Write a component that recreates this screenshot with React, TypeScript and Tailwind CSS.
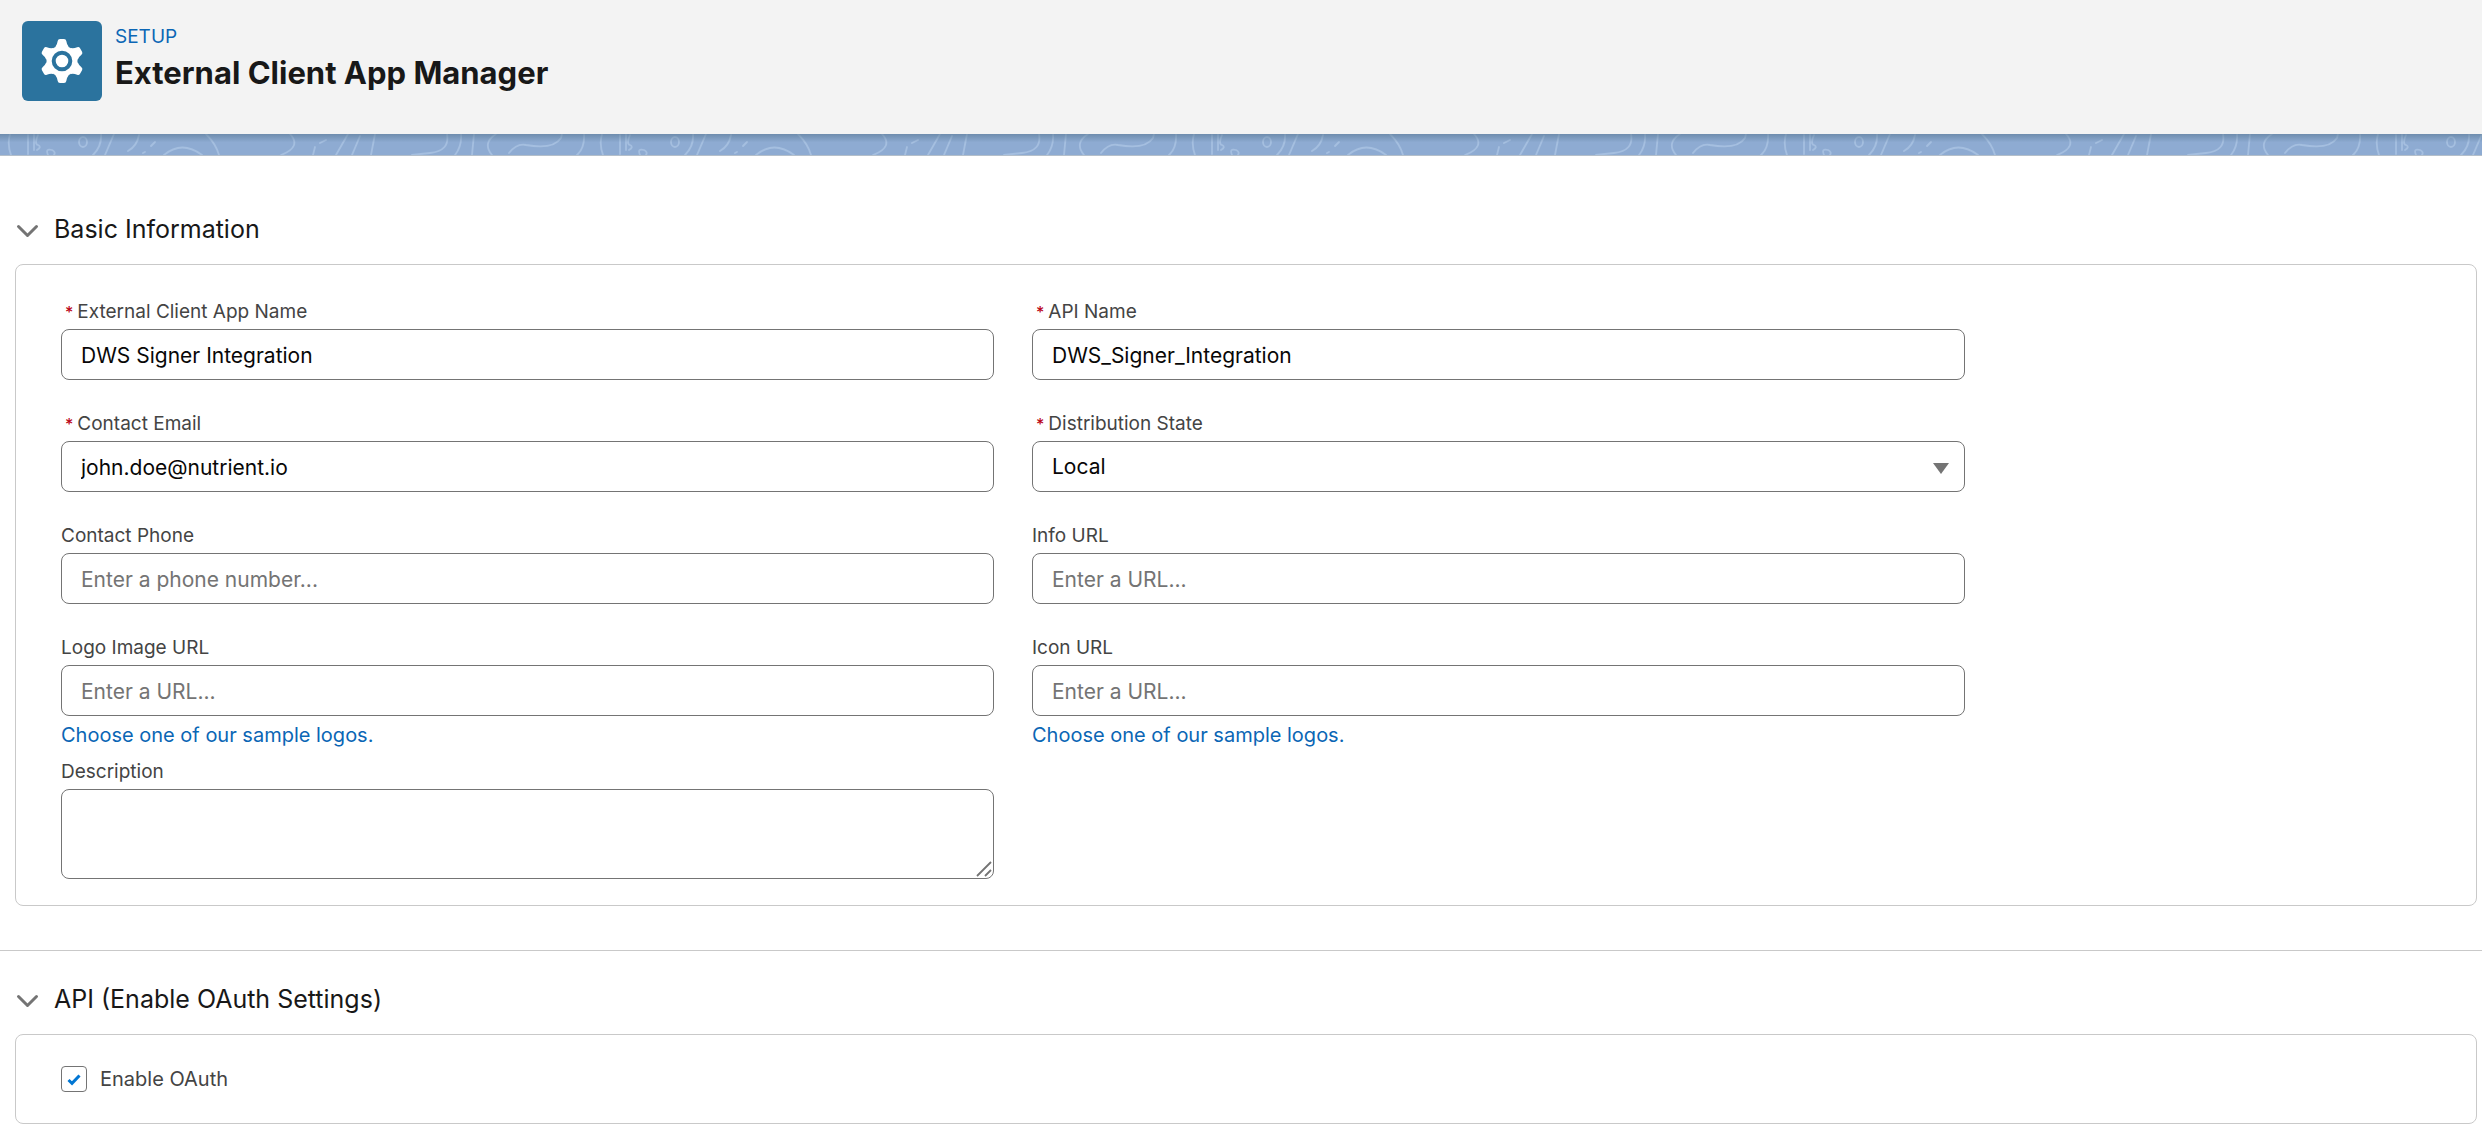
import React, { useState } from 'react';

interface FieldProps {
  id: string;
  label: string;
  required?: boolean;
  children: React.ReactNode;
}

const controlClass =
  'block w-full h-[51px] rounded-lg border border-[#747474] bg-white px-[19px] pt-0.5 text-[21px] text-[#080707] placeholder:text-[#747474] outline-none focus:border-[#0176d3]';

const Field: React.FC<FieldProps> = ({ id, label, required, children }) => {
  return (
    <div>
      <label htmlFor={id} className="mb-[5px] flex h-6 items-center text-[19px] leading-6 text-[#444444]">
        {required && (
          <abbr title="required" className="mr-1 ml-1 text-base font-medium text-[#ba0517] no-underline">
            *
          </abbr>
        )}
        {label}
      </label>
      {children}
    </div>
  );
};

interface TextFieldProps {
  id: string;
  label: string;
  required?: boolean;
  type?: string;
  placeholder?: string;
  initialValue?: string;
}

const TextField: React.FC<TextFieldProps> = ({ id, label, required, type = 'text', placeholder, initialValue = '' }) => {
  const [value, setValue] = useState(initialValue);

  return (
    <Field id={id} label={label} required={required}>
      <input
        id={id}
        type={type}
        value={value}
        placeholder={placeholder}
        required={required}
        onChange={(e) => setValue(e.target.value)}
        className={controlClass}
      />
    </Field>
  );
};

const SampleLogosLink = () => (
  <a href="#logos" className="mt-[5px] block w-fit text-[20px] leading-7 text-[#0b66b5] hover:underline">
    Choose one of our sample logos.
  </a>
);

const GearIcon = () => (
  <svg viewBox="0 0 44 44" className="h-11 w-11" aria-hidden="true">
    <g fill="#ffffff">
      <circle cx="22" cy="22" r="15.5" />
      {[0, 60, 120, 180, 240, 300].map((angle) => (
        <path
          key={angle}
          d="M20 0 H24 Q26 0 26.3 2 Q26.8 5.5 28.5 7.5 L27 12 H17 L15.5 7.5 Q17.2 5.5 17.7 2 Q18 0 20 0 Z"
          transform={`rotate(${angle} 22 22)`}
        />
      ))}
    </g>
    <circle cx="22" cy="22" r="8.3" fill="#ffffff" stroke="#2b739e" strokeWidth="4" />
  </svg>
);

// Topographic line pattern under the page header
const HeaderStrip = () => (
  <div className="h-[22px] border-b border-[#b4bfca] bg-[#8eabd2]">
    <svg className="block h-[21px] w-full" aria-hidden="true">
      <defs>
        <pattern id="contours" width="592" height="21" patternUnits="userSpaceOnUse">
          <g fill="none" stroke="#a5bfe0" strokeWidth="1.8" strokeLinecap="round">
            <path d="M10 0 Q7 10 11 21" />
            <path d="M28 1 V20 M34 0 V16" />
            <path d="M38 1 Q34 10 38 11 Q42 13 37 16" />
            <path d="M48 21 Q45 14 52 16 Q56 18 54 21" />
            <ellipse cx="83" cy="8" rx="4" ry="5" />
            <path d="M101 0 Q102 12 93 21" />
            <path d="M114 0 L105 21" />
            <path d="M139 1 Q137 12 128 17" />
            <path d="M155 8 L151 12 M143 19 L145 18" />
            <path d="M164 21 Q182 6 202 21" />
            <path d="M206 0 Q216 10 219 21" />
            <path d="M290 0 Q302 13 281 21" />
            <path d="M326 6 L320 9 M315 13 L313 21" />
            <path d="M348 0 L336 21 M360 2 L352 21 M375 0 L371 21" />
            <path d="M447 0 Q450 17 430 19 L412 21" />
            <path d="M461 0 Q462 12 455 21 M474 0 L472 21" />
            <path d="M496 0 Q482 9 492 21" />
            <path d="M509 19 Q517 9 526 11 Q553 16 561 4 L562 0" />
            <path d="M584 0 Q585 14 577 21" />
          </g>
        </pattern>
        <linearGradient id="stripShade" x1="0" y1="0" x2="0" y2="1">
          <stop offset="0" stopColor="#54748f" stopOpacity="0.55" />
          <stop offset="0.4" stopColor="#54748f" stopOpacity="0" />
        </linearGradient>
      </defs>
      <rect width="100%" height="21" fill="url(#contours)" />
      <rect width="100%" height="21" fill="url(#stripShade)" />
    </svg>
  </div>
);

interface SectionProps {
  title: string;
  children: React.ReactNode;
}

const Section: React.FC<SectionProps> = ({ title, children }) => {
  const [open, setOpen] = useState(true);

  return (
    <div className="pr-[5px] pl-[15px]">
      <h2 className="mb-[19px]">
        <button
          type="button"
          aria-expanded={open}
          onClick={() => setOpen(!open)}
          className="flex h-8 items-center gap-[15px] text-[25px] leading-8 text-[#181818]"
        >
          <svg viewBox="0 0 24 20" className={open ? 'h-5 w-6' : 'h-5 w-6 -rotate-90'} aria-hidden="true">
            <path d="M3.5 7.5 L12.5 16.5 L21.5 7.5" fill="none" stroke="#747474" strokeWidth="3" strokeLinecap="round" strokeLinejoin="round" />
          </svg>
          {title}
        </button>
      </h2>
      {open && <div className="rounded-lg border border-[#c9c9c9] bg-white pr-[35px] pl-[45px]">{children}</div>}
    </div>
  );
};

const App = () => {
  const [distribution, setDistribution] = useState('Local');
  const [description, setDescription] = useState('');
  const [oauth, setOauth] = useState(true);

  return (
    <div className="min-h-screen bg-white font-[Inter,'Liberation_Sans',sans-serif]">
      <header>
        <div className="flex h-[134px] items-start gap-[13px] bg-[#f3f3f3] pt-[21px] pl-[22px]">
          <div className="flex h-20 w-20 items-center justify-center rounded-md bg-[#2b739e]">
            <GearIcon />
          </div>
          <div className="pt-1">
            <p className="text-[19px] leading-6 text-[#0b66b5]">SETUP</p>
            <h1 className="text-[31px] leading-[48px] font-bold text-[#181818]">External Client App Manager</h1>
          </div>
        </div>
        <HeaderStrip />
      </header>

      <main>
        {/* Basic Information */}
        <div className="pt-[57px] pb-11">
          <Section title="Basic Information">
            <div className="grid w-4/5 grid-cols-2 gap-x-[38px] gap-y-8 pt-[35px]">
              <TextField id="app-name" label="External Client App Name" required initialValue="DWS Signer Integration" />
              <TextField id="api-name" label="API Name" required initialValue="DWS_Signer_Integration" />
              <TextField id="email" label="Contact Email" required type="email" initialValue="john.doe@nutrient.io" />
              <Field id="distribution" label="Distribution State" required>
                <div className="relative">
                  <select
                    id="distribution"
                    value={distribution}
                    onChange={(e) => setDistribution(e.target.value)}
                    className="block h-[51px] w-full appearance-none rounded-lg border border-[#747474] bg-white px-[19px] text-[21px] text-[#080707] outline-none"
                  >
                    <option>Local</option>
                    <option>Packaged</option>
                  </select>
                  <svg viewBox="0 0 16 11" className="pointer-events-none absolute top-[22px] right-4 h-[11px] w-4" aria-hidden="true">
                    <path d="M0 0 H16 L8 11 Z" fill="#747474" />
                  </svg>
                </div>
              </Field>
              <TextField id="phone" label="Contact Phone" type="tel" placeholder="Enter a phone number..." />
              <TextField id="info-url" label="Info URL" type="url" placeholder="Enter a URL..." />
              <div>
                <TextField id="logo-url" label="Logo Image URL" type="url" placeholder="Enter a URL..." />
                <SampleLogosLink />
              </div>
              <div>
                <TextField id="icon-url" label="Icon URL" type="url" placeholder="Enter a URL..." />
                <SampleLogosLink />
              </div>
            </div>
            <div className="grid w-4/5 grid-cols-2 gap-x-[38px] pt-[11px] pb-[26px]">
              <Field id="description" label="Description">
                <div className="relative">
                  <textarea
                    id="description"
                    value={description}
                    onChange={(e) => setDescription(e.target.value)}
                    className="block h-[90px] w-full resize-none rounded-lg border border-[#747474] bg-white px-[19px] py-3 text-[21px] text-[#080707] outline-none"
                  />
                  <svg viewBox="0 0 16 16" className="pointer-events-none absolute right-0.5 bottom-0.5 h-4 w-4" aria-hidden="true">
                    <path d="M1 15 L15 1 M9 15 L15 9" stroke="#747474" strokeWidth="1.8" />
                  </svg>
                </div>
              </Field>
            </div>
          </Section>
        </div>

        {/* API settings */}
        <div className="border-t border-[#c9c9c9] pt-8 pb-3">
          <Section title="API (Enable OAuth Settings)">
            <div className="py-[31px]">
              <label htmlFor="enable-oauth" className="flex w-fit items-center gap-[13px] text-[20px] leading-[26px] text-[#444444]">
                <span className="relative block h-[26px] w-[26px]">
                  <input
                    id="enable-oauth"
                    type="checkbox"
                    checked={oauth}
                    onChange={(e) => setOauth(e.target.checked)}
                    className="block h-[26px] w-[26px] appearance-none rounded-sm border border-[#747474] bg-white"
                  />
                  {oauth && (
                    <svg viewBox="0 0 26 26" className="pointer-events-none absolute inset-0 h-[26px] w-[26px]" aria-hidden="true">
                      <path d="M7.5 14 L11 17.3 L18.5 9.5" fill="none" stroke="#0176d3" strokeWidth="3" />
                    </svg>
                  )}
                </span>
                Enable OAuth
              </label>
            </div>
          </Section>
        </div>
      </main>
    </div>
  );
};

export default App;
